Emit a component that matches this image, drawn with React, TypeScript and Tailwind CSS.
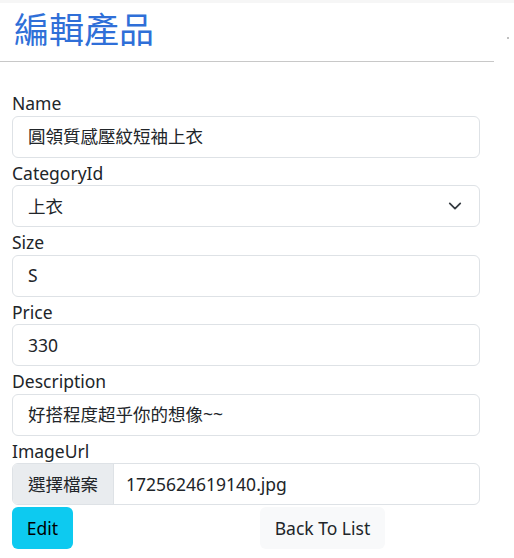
import React from "react";

const font = { fontFamily: '"Segoe UI", "Noto Sans", "Noto Sans CJK TC", sans-serif' };

const Field: React.FunctionComponent<{ label: string; children: React.ReactNode }> = ({ label, children }) => (
    <div className="flex flex-col">
        <label className="h-[27.5px] leading-[30px] text-[17.5px] text-[#212529]">{label}</label>
        {children}
    </div>
);

const TextBox: React.FunctionComponent<{ value: string }> = ({ value }) => (
    <div className="h-[42px] flex items-center px-[15px] border border-[#dee2e6] rounded-[6px] bg-white text-[17.5px] text-[#212529]">
        {value}
    </div>
);

export default function App() {
    return (
        <div className="w-[514px] h-[558px] bg-white overflow-hidden relative" style={font}>
            <div className="h-[3px] bg-[#f6f6f6]" />
            <div className="w-[494px]">
                <h2 className="pl-[14px] pt-[6px] h-[48px] text-[35px] leading-[42px] text-[#2f6fd8] font-normal">編輯產品</h2>
                <hr className="mt-[10px] border-t border-[#c8c8c8]" />
                <div className="pl-[12px] pr-[14px] pt-[26px] flex flex-col">
                    <Field label="Name">
                        <TextBox value="圓領質感壓紋短袖上衣" />
                    </Field>
                    <Field label="CategoryId">
                        <div className="h-[42px] flex items-center justify-between pl-[15px] pr-[17px] border border-[#dee2e6] rounded-[6px] bg-white text-[17.5px] text-[#212529]">
                            <span>上衣</span>
                            <svg width="14" height="14" viewBox="0 0 16 16" fill="none">
                                <path d="M2 5l6 6 6-6" stroke="#343a40" strokeWidth="2" strokeLinecap="round" strokeLinejoin="round" />
                            </svg>
                        </div>
                    </Field>
                    <Field label="Size">
                        <TextBox value="S" />
                    </Field>
                    <Field label="Price">
                        <TextBox value="330" />
                    </Field>
                    <Field label="Description">
                        <TextBox value="好搭程度超乎你的想像~~" />
                    </Field>
                    <Field label="ImageUrl">
                        <div className="h-[42px] flex border border-[#dee2e6] rounded-[6px] overflow-hidden bg-white text-[17.5px] text-[#212529]">
                            <div className="w-[101px] flex items-center justify-center bg-[#e9ecef] border-r border-[#dee2e6]">選擇檔案</div>
                            <div className="flex items-center pl-[12px]">1725624619140.jpg</div>
                        </div>
                    </Field>
                    <div className="flex items-center mt-[2px]">
                        <button className="h-[42px] w-[61px] rounded-[6px] bg-[#0dcaf0] text-[17.5px] text-black">Edit</button>
                        <button className="ml-[187px] h-[42px] w-[125px] rounded-[6px] bg-[#f8f9fa] text-[17.5px] text-[#212529]">Back To List</button>
                    </div>
                </div>
            </div>
            <div className="absolute left-[507px] top-[37px] w-[2px] h-[2px] bg-[#c0c0c0]" />
        </div>
    );
}
